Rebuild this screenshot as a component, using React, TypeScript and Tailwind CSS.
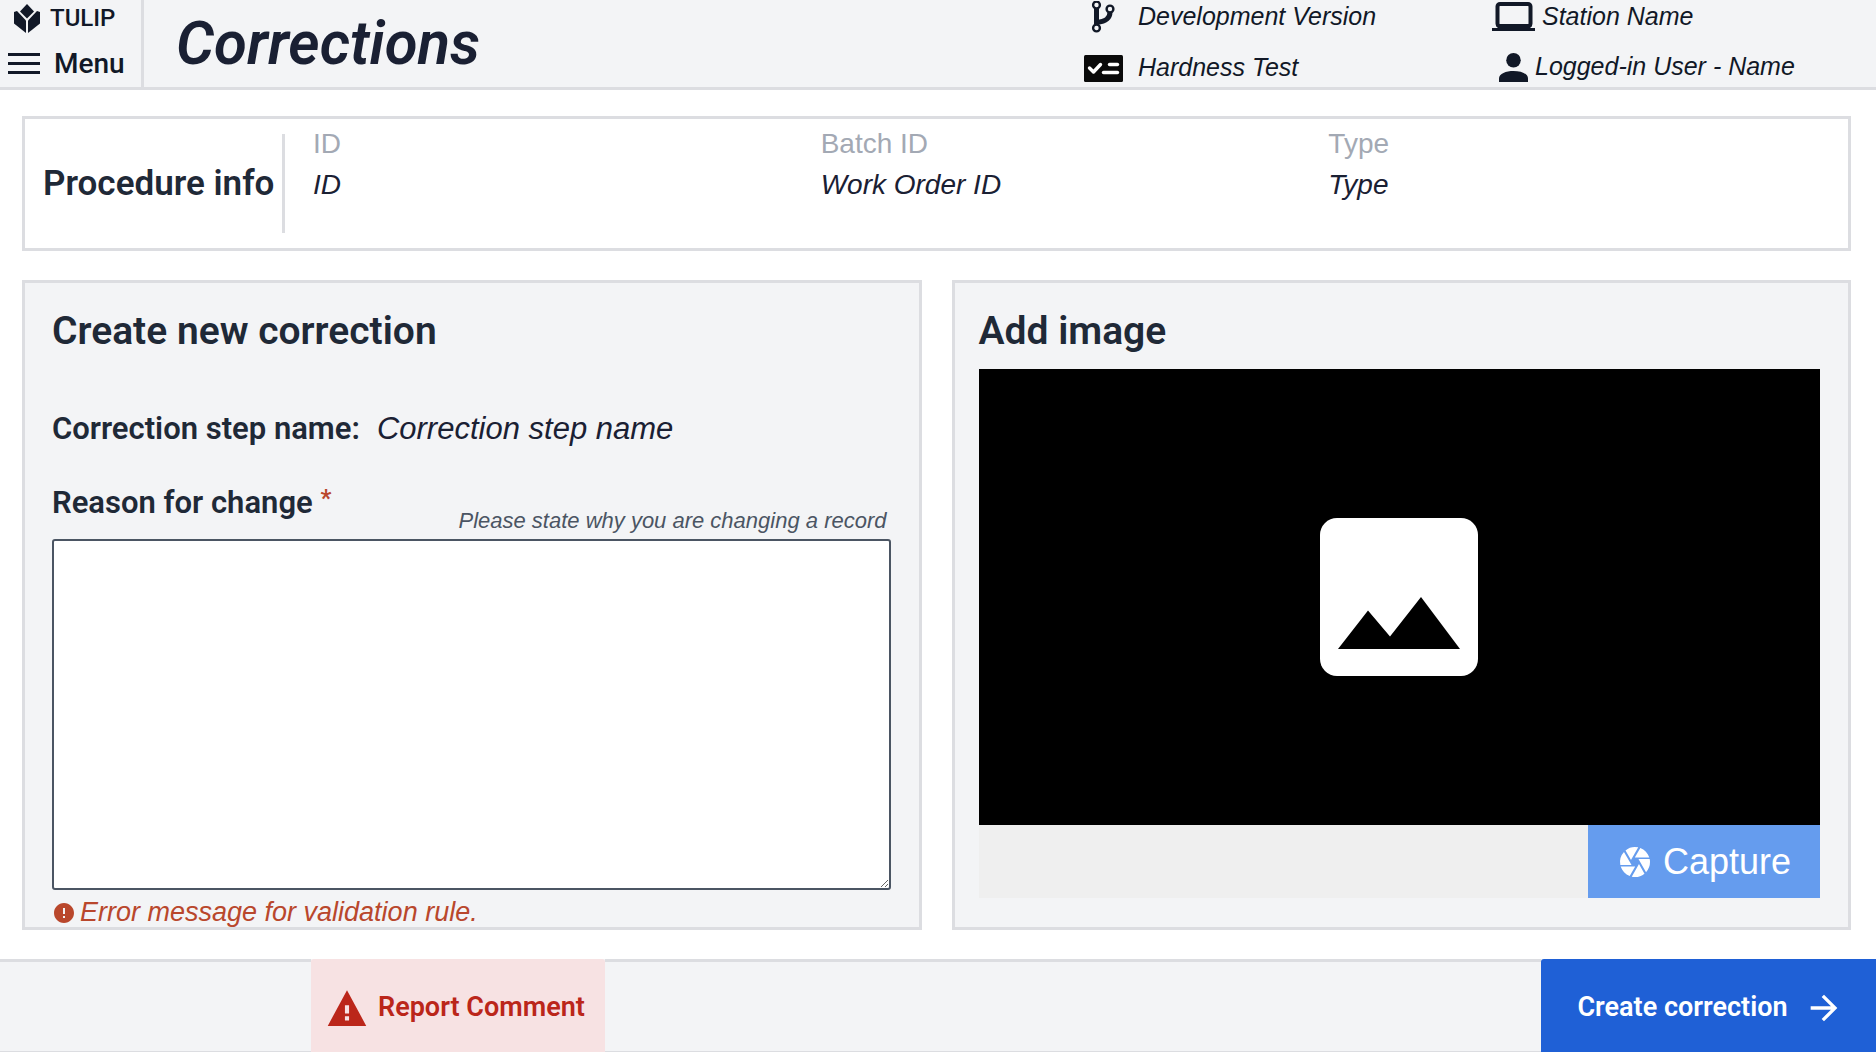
import type { ReactNode } from "react";
import { IoMdWarning } from "react-icons/io";
import { MdArrowForward, MdCamera, MdError } from "react-icons/md";

const heading = "font-['Roboto',sans-serif] font-semibold text-[#1f2937]";
const body = "font-['Liberation_Sans',Arial,sans-serif]";

interface Field {
  label: string;
  value: string;
}

const fields: Field[] = [
  { label: "ID", value: "ID" },
  { label: "Batch ID", value: "Work Order ID" },
  { label: "Type", value: "Type" },
];

function TulipLogo() {
  return (
    <svg width="26" height="29" viewBox="0 0 26 29" fill="currentColor" aria-hidden="true">
      <path d="M13 0 L20 7.5 L13 14.5 L6 7.5 Z" />
      <path d="M0 8 L3 7 L12 16.5 V29 L0 19.5 Z" />
      <path d="M26 8 L23 7 L14 16.5 V29 L26 19.5 Z" />
    </svg>
  );
}

function BranchIcon() {
  return (
    <svg width="24" height="32" viewBox="0 0 24 32" fill="none" stroke="currentColor" aria-hidden="true">
      <path d="M5.5 7 V24" strokeWidth="5" />
      <path d="M6 21.5 C14 20.5 19 18 19 11" strokeWidth="5" />
      <circle cx="5.5" cy="4" r="3.4" strokeWidth="2.4" fill="#f3f4f6" />
      <circle cx="5.5" cy="27" r="3.4" strokeWidth="2.4" fill="#f3f4f6" />
      <circle cx="19" cy="8" r="3.4" strokeWidth="2.4" fill="#f3f4f6" />
    </svg>
  );
}

function ChecklistIcon() {
  return (
    <svg width="39" height="27" viewBox="0 0 39 27" fill="none" aria-hidden="true">
      <rect width="39" height="27" rx="1.5" fill="#0a0a0a" />
      <g stroke="#fff" strokeWidth="3.4" strokeLinecap="round" strokeLinejoin="round">
        <path d="M5.5 13 L9.5 17 L16.5 9.5" />
        <path d="M25.5 9.5 H33.5" />
        <path d="M19.5 17.5 H33.5" />
      </g>
    </svg>
  );
}

function LaptopIcon() {
  return (
    <svg width="43" height="29" viewBox="0 0 43 29" fill="none" aria-hidden="true">
      <rect x="5.5" y="2" width="33" height="22" rx="2.5" stroke="currentColor" strokeWidth="4" />
      <path d="M4 22 H40 V24 L38 26 H43 V29 H0 V26 H6 L4 24 Z" fill="currentColor" />
    </svg>
  );
}

function PersonIcon() {
  return (
    <svg width="29" height="29" viewBox="0 0 29 29" fill="currentColor" aria-hidden="true">
      <circle cx="14.5" cy="7.25" r="7.25" />
      <path d="M0 29 V25.5 C0 20.5 7 18 14.5 18 S29 20.5 29 25.5 V29 Z" />
    </svg>
  );
}

function ImagePlaceholder() {
  return (
    <svg width="158" height="158" viewBox="0 0 158 158" aria-hidden="true">
      <rect width="158" height="158" rx="17" fill="#fff" />
      <path d="M18 131 L48 92.5 L70 118.5 L101 79 L140 131 Z" fill="#000" />
    </svg>
  );
}

function HeaderItem({ icon, children }: { icon: ReactNode; children: ReactNode }) {
  return (
    <div className="flex items-center">
      {icon}
      <span>{children}</span>
    </div>
  );
}

function Header() {
  return (
    <header className="flex h-[90px] border-b-3 border-[#dcdde1] bg-[#f3f4f6] text-[#111827]">
      <div className="flex w-[144px] shrink-0 flex-col border-r-3 border-[#dcdde1] font-['Roboto',sans-serif] font-medium">
        <div className="flex h-9 items-center gap-[10px] pl-[14px] text-[24px]">
          <TulipLogo />
          <span>TULIP</span>
        </div>
        <button type="button" className="flex h-[54px] items-center gap-[14px] pt-1 pl-2 text-[28px]">
          <svg width="32" height="21" viewBox="0 0 32 21" fill="none" stroke="currentColor" strokeWidth="3" aria-hidden="true">
            <path d="M0 1.5 H32 M0 10.5 H32 M0 19.5 H32" />
          </svg>
          <span>Menu</span>
        </button>
      </div>
      <h1 className="flex-1 pl-8 font-['Roboto',sans-serif] text-[60px] leading-[87px] font-semibold text-[#1a2033] italic">
        Corrections
      </h1>
      <div className={`grid w-[793px] shrink-0 grid-cols-[408px_1fr] grid-rows-[33px_1fr] text-[25px] italic ${body}`}>
        <HeaderItem icon={<span className="flex w-[55px] pl-2"><BranchIcon /></span>}>Development Version</HeaderItem>
        <HeaderItem icon={<span className="flex w-[51px] pl-px"><LaptopIcon /></span>}>Station Name</HeaderItem>
        <div className="flex items-center pt-4">
          <HeaderItem icon={<span className="flex w-[55px] pl-px"><ChecklistIcon /></span>}>Hardness Test</HeaderItem>
        </div>
        <div className="flex items-center pt-[14px]">
          <HeaderItem icon={<span className="flex w-11 pl-2"><PersonIcon /></span>}>Logged-in User - Name</HeaderItem>
        </div>
      </div>
    </header>
  );
}

function ProcedureInfo() {
  return (
    <section className="flex h-[135px] border-3 border-[#dcdde1] bg-white">
      <h2 className={`flex w-[257px] shrink-0 items-center pt-0.5 pl-[18px] text-[35px] whitespace-nowrap ${heading}`}>
        Procedure info
      </h2>
      <div className="my-[15px] w-[3px] shrink-0 bg-[#dcdde1]" />
      <dl className={`grid flex-1 grid-cols-3 pt-1 pr-3 pl-7 text-[28px] leading-[41px] ${body}`}>
        {fields.map((field) => (
          <div key={field.label}>
            <dt className="text-[#a3a9b4]">{field.label}</dt>
            <dd className="text-[#1a2033] italic">{field.value}</dd>
          </div>
        ))}
      </dl>
    </section>
  );
}

function CorrectionForm() {
  return (
    <section className="flex flex-col border-3 border-[#dcdde1] bg-[#f3f4f6] pr-7 pl-[27px]">
      <h2 className={`mt-[23px] text-[39px] leading-[50px] ${heading}`}>Create new correction</h2>
      <p className="mt-[53px] flex items-baseline gap-[17px] leading-10">
        <span className={`text-[31px] ${heading}`}>Correction step name:</span>
        <span className={`text-[31px] text-[#1a2033] italic ${body}`}>Correction step name</span>
      </p>
      <div className="mt-8 flex h-[58px] justify-between">
        <label htmlFor="reason" className={`text-[31px] leading-[44px] ${heading}`}>
          Reason for change{" "}
          <sup className="top-0 align-text-top text-[24px] leading-7 font-bold text-[#b9472c]">*</sup>
        </label>
        <span id="reason-hint" className={`self-end pr-1 text-[22px] leading-[36px] text-[#4b5563] italic ${body}`}>
          Please state why you are changing a record
        </span>
      </div>
      <textarea
        id="reason"
        aria-describedby="reason-hint reason-error"
        className="w-full flex-1 rounded-[3px] border-2 border-[#4b5563] bg-white p-2 text-[24px]"
      />
      <p id="reason-error" className={`flex h-[37px] items-center gap-1 pt-2 text-[27px] text-[#b9472c] italic ${body}`}>
        <MdError className="size-6" />
        Error message for validation rule.
      </p>
    </section>
  );
}

function ImagePanel() {
  return (
    <section className="flex flex-col border-3 border-[#dcdde1] bg-[#f3f4f6] pr-7 pb-[29px] pl-6">
      <h2 className={`mt-[23px] text-[39px] leading-[50px] ${heading}`}>Add image</h2>
      <div className="mt-[13px] flex flex-1 items-center justify-center bg-black">
        <ImagePlaceholder />
      </div>
      <div className="flex h-[73px] justify-end bg-[#efefef]">
        <button
          type="button"
          className={`flex w-[232px] items-center justify-center gap-[10px] bg-[#659cee] text-[36px] text-white ${body}`}
        >
          <MdCamera className="size-9" />
          Capture
        </button>
      </div>
    </section>
  );
}

function Footer() {
  return (
    <footer className="flex h-[93px] justify-between bg-[#f3f4f6] font-['Roboto',sans-serif] font-semibold">
      <div className="w-[311px] border-t-3 border-b border-[#dcdde1]" />
      <button
        type="button"
        className="flex w-[294px] items-center gap-[9px] rounded-t-[3px] bg-[#f7e2e3] pt-1 pl-[14px] text-[27px] whitespace-nowrap text-[#bb261a]"
      >
        <IoMdWarning className="size-11" />
        Report Comment
      </button>
      <div className="flex-1 border-t-3 border-b border-[#dcdde1]" />
      <button
        type="button"
        className="flex w-[335px] items-center justify-center gap-4 rounded-tl-[3px] bg-[#1f60d6] pt-1 pl-1 text-[27px] whitespace-nowrap text-white"
      >
        Create correction
        <MdArrowForward className="size-10" />
      </button>
    </footer>
  );
}

export default function App() {
  return (
    <div className="flex min-h-screen flex-col bg-white">
      <Header />
      <main className="flex flex-1 flex-col gap-[29px] pt-[26px] pr-[25px] pb-[29px] pl-[22px]">
        <ProcedureInfo />
        <div className="grid flex-1 grid-cols-2 gap-[30px]">
          <CorrectionForm />
          <ImagePanel />
        </div>
      </main>
      <Footer />
    </div>
  );
}
